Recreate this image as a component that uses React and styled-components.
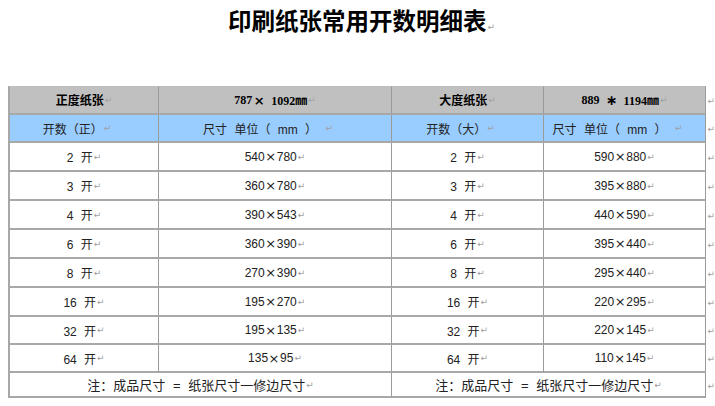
import React from "react";
import styled, { createGlobalStyle } from "styled-components";

const Global = createGlobalStyle`
  html, body { margin: 0; padding: 0; background: #fff; }
  body { font-family: "Liberation Sans", "Noto Sans CJK SC", sans-serif; color: #1a1a1a; }
`;

const Page = styled.div`
  width: 715px;
  padding-left: 8px;
  box-sizing: border-box;
`;

const Title = styled.h1`
  margin: 0 0 46px 0;
  height: 40px;
  line-height: 40px;
  text-align: center;
  font-family: "Noto Sans CJK SC", sans-serif;
  font-weight: 700;
  font-size: 23.5px;
  color: #000;
`;

const Sheet = styled.div`
  display: grid;
  grid-template-columns: 151px 233px 152px 162px 9px;
`;

const Cell = styled.div`
  height: ${(p) => p.$h}px;
  box-sizing: border-box;
  display: flex;
  align-items: center;
  justify-content: center;
  padding-right: ${(p) => (p.$tone === "blue" ? 14 : 0)}px;
  grid-column: span ${(p) => p.$span || 1};
  background: ${(p) => (p.$tone === "gray" ? "#c0c0c0" : p.$tone === "blue" ? "#99ccff" : "#fff")};
  border-bottom: 2px solid #a8a8a8;
  border-right: 1px solid #9a9a9a;
  border-left: ${(p) => (p.$first ? "2px solid #a8a8a8" : "none")};
  border-top: ${(p) => (p.$top ? "1px solid #bdbdbd" : "none")};
  font-size: ${(p) => p.$size || 12}px;
  word-spacing: ${(p) => (p.$bold ? 2 : 4)}px;
  font-weight: ${(p) => (p.$bold ? 700 : 400)};
  font-family: ${(p) => (p.$bold ? '"Liberation Serif", "Noto Sans CJK SC", serif' : '"Liberation Sans", "Noto Sans CJK SC", sans-serif')};
  color: ${(p) => (p.$bold ? "#000" : "#222")};
  white-space: pre;
`;

const Times = styled.span`
  display: inline-block;
  width: ${(p) => p.$w || 12}px;
  text-align: center;
  font-size: ${(p) => p.$fs || 13}px;
  font-family: "DejaVu Sans", sans-serif;
`;

const Mark = styled.span`
  font-family: "DejaVu Sans", sans-serif;
  font-size: 9px;
  color: #a0a0a0;
  margin-left: 1px;
  font-weight: 400;
  word-spacing: 0;
`;

const Edge = styled.div`
  height: ${(p) => p.$h}px;
  display: flex;
  align-items: center;
  justify-content: flex-end;
`;

const Ret = () => <Mark>↵</Mark>;

const Size = ({ v }) => {
  const [a, b] = v.split("×");
  return (
    <>
      {a}
      <Times>×</Times>
      {b}
    </>
  );
};

const rows = [
  ["2 开", "540×780", "2 开", "590×880", 29],
  ["3 开", "360×780", "3 开", "395×880", 29],
  ["4 开", "390×543", "4 开", "440×590", 29],
  ["6 开", "360×390", "6 开", "395×440", 29],
  ["8 开", "270×390", "8 开", "295×440", 29],
  ["16 开", "195×270", "16 开", "220×295", 29],
  ["32 开", "195×135", "32 开", "220×145", 28],
  ["64 开", "135×95", "64 开", "110×145", 28],
];

export default function App() {
  return (
    <>
      <Global />
      <Page>
        <Title>
          印刷纸张常用开数明细表<Ret />
        </Title>
        <Sheet>
          <Cell $h={29} $tone="gray" $bold $first $top>正度纸张<Ret /></Cell>
          <Cell $h={29} $tone="gray" $bold $top>787<Times $w={14} $fs={13}>×</Times> 1092㎜<Ret /></Cell>
          <Cell $h={29} $tone="gray" $bold $top>大度纸张<Ret /></Cell>
          <Cell $h={29} $tone="gray" $bold $top>889 <Times $w={14} $fs={14}>∗</Times> 1194㎜<Ret /></Cell>
          <Edge $h={29}><Ret /></Edge>

          <Cell $h={28} $tone="blue" $first>开数（正）<Ret /></Cell>
          <Cell $h={28} $tone="blue">尺寸 单位（ mm ） <Ret /></Cell>
          <Cell $h={28} $tone="blue">开数（大）<Ret /></Cell>
          <Cell $h={28} $tone="blue">尺寸 单位（ mm ） <Ret /></Cell>
          <Edge $h={28}><Ret /></Edge>

          {rows.map(([a, b, c, d, h]) => (
            <React.Fragment key={a}>
              <Cell $h={h} $first>{a}<Ret /></Cell>
              <Cell $h={h}><Size v={b} /><Ret /></Cell>
              <Cell $h={h}>{c}<Ret /></Cell>
              <Cell $h={h}><Size v={d} /><Ret /></Cell>
              <Edge $h={h}><Ret /></Edge>
            </React.Fragment>
          ))}

          <Cell $h={25} $size={13} $span={2} $first>注：成品尺寸 = 纸张尺寸一修边尺寸<Ret /></Cell>
          <Cell $h={25} $size={13} $span={2}>注：成品尺寸 = 纸张尺寸一修边尺寸<Ret /></Cell>
          <Edge $h={25}><Ret /></Edge>
        </Sheet>
      </Page>
    </>
  );
}
